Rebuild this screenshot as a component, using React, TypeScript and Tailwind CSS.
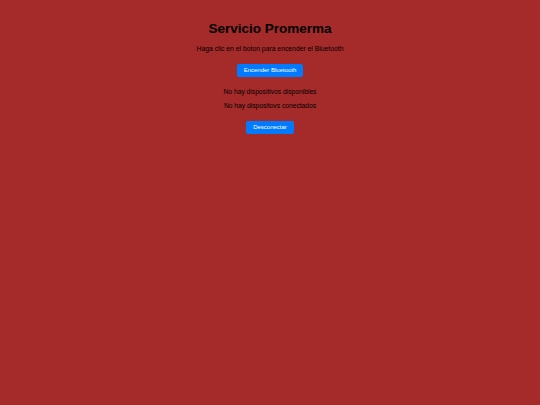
export default function App() {
  return (
    <div className="min-h-[405px] w-full bg-[#a52a2a] text-black flex flex-col items-center pt-[22px] font-['Liberation_Sans',Arial,sans-serif]">
      <h1 className="text-[13.5px] font-bold leading-none mb-[10px]">Servicio Promerma</h1>
      <p className="text-[6.8px] leading-none mb-[12px]">Haga clic en el boton para encender el Bluetooth</p>
      <button className="bg-[#007bff] text-white text-[6px] px-[7px] h-[13px] rounded-[2px] mb-[12px]">
        Encender Bluetooth
      </button>
      <p className="text-[6.7px] leading-none mb-[7px]">No hay dispositivos disponibles</p>
      <p className="text-[6.7px] leading-none mb-[11px]">No hay dispositovs conectados</p>
      <button className="bg-[#007bff] text-white text-[6px] px-[7px] h-[13px] rounded-[2px]">
        Desconectar
      </button>
    </div>
  );
}
